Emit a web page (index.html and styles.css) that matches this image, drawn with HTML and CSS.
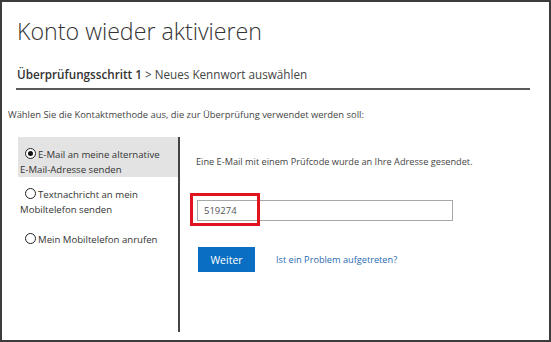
FILE: index.html
```html
<!DOCTYPE html>
<html lang="de">
<head>
    <meta charset="UTF-8">
    <meta name="viewport" content="width=device-width, initial-scale=1.0">
    <title>Konto wieder aktivieren</title>
    <link rel="stylesheet" href="styles.css">
</head>
<body>
    <div class="frame">
        <h1>Konto wieder aktivieren</h1>

        <div class="steps">
            <strong>Überprüfungsschritt 1</strong> &gt; Neues Kennwort auswählen
        </div>

        <p class="intro">Wählen Sie die Kontaktmethode aus, die zur Überprüfung verwendet werden soll:</p>

        <div class="verify">
            <div class="methods">
                <div class="method selected">
                    <span class="radio checked"></span>E-Mail an meine alternative <span class="nowrap">E-Mail-Adresse</span> senden
                </div>
                <div class="method">
                    <span class="radio"></span>Textnachricht an mein Mobiltelefon senden
                </div>
                <div class="method last">
                    <span class="radio"></span>Mein Mobiltelefon anrufen
                </div>
            </div>

            <div class="detail">
                <p class="info">Eine E-Mail mit einem Prüfcode wurde an Ihre Adresse gesendet.</p>

                <div class="code-field">
                    <input type="text" class="code" value="519274">
                    <span class="highlight"></span>
                </div>

                <div class="actions">
                    <button type="button">Weiter</button>
                    <a href="#" class="help">Ist ein Problem aufgetreten?</a>
                </div>
            </div>
        </div>
    </div>
</body>
</html>
```

FILE: styles.css
```css
body {
    margin: 0;
    font-family: "Open Sans", "Noto Sans", sans-serif;
    color: #333;
    background: #fff;
}
.frame {
    width: 551px;
    height: 342px;
    box-sizing: border-box;
    border: 2px solid #3c3c3c;
    overflow: hidden;
}
h1 {
    margin: 14px 0 0 15px;
    font-size: 23.2px;
    font-weight: 300;
    line-height: 30px;
    color: #333;
}
.steps {
    margin: 20px 19px 0 14px;
    padding: 0 0 5px 1px;
    border-bottom: 2px solid #5a5a5a;
    font-size: 11.7px;
    line-height: 17px;
    color: #444;
}
.steps strong {
    font-weight: 600;
    color: #333;
}
.intro {
    margin: 18px 0 0 6px;
    font-size: 9.4px;
    line-height: 14px;
    color: #444;
}
.verify {
    display: flex;
    margin: 15px 0 0 16px;
    height: 195px;
}
.methods {
    width: 160px;
    font-size: 9.6px;
    line-height: 15px;
    color: #333;
}
.method {
    padding: 10px 0 0 2px;
}
.method.selected {
    background: #e3e3e3;
}
.method.last {
    margin-top: 5px;
}
.nowrap {
    white-space: nowrap;
}
.radio {
    display: inline-block;
    width: 9px;
    height: 9px;
    margin: 0 2px -1px 5px;
    border: 1px solid #222;
    border-radius: 50%;
    box-sizing: content-box;
    position: relative;
    background: #fff;
}
.radio.checked::after {
    content: "";
    position: absolute;
    left: 2px;
    top: 2px;
    width: 5px;
    height: 5px;
    border-radius: 50%;
    background: #111;
}
.detail {
    flex: 1;
    border-left: 2px solid #444;
    padding: 17px 0 0 16px;
}
.info {
    margin: 0;
    font-size: 9.2px;
    line-height: 16px;
    color: #444;
}
.code-field {
    position: relative;
    width: 256px;
    margin: 30px 0 0 1px;
}
.code {
    display: block;
    width: 256px;
    height: 21px;
    box-sizing: border-box;
    padding: 0 6px;
    border: 1px solid #a8a8a8;
    font-family: inherit;
    font-size: 9.5px;
    color: #555;
}
.highlight {
    position: absolute;
    left: -7px;
    top: -7px;
    width: 70px;
    height: 33px;
    box-sizing: border-box;
    border: 3px solid #e0141e;
}
.actions {
    display: flex;
    align-items: center;
    margin: 26px 0 0 2px;
}
button {
    width: 57px;
    height: 25px;
    border: none;
    background-color: #0a6fc2;
    color: #fff;
    font-family: inherit;
    font-size: 10.5px;
    cursor: pointer;
}
.help {
    margin-left: 21px;
    font-size: 9.2px;
    color: #2a6cb3;
    text-decoration: none;
}
```
